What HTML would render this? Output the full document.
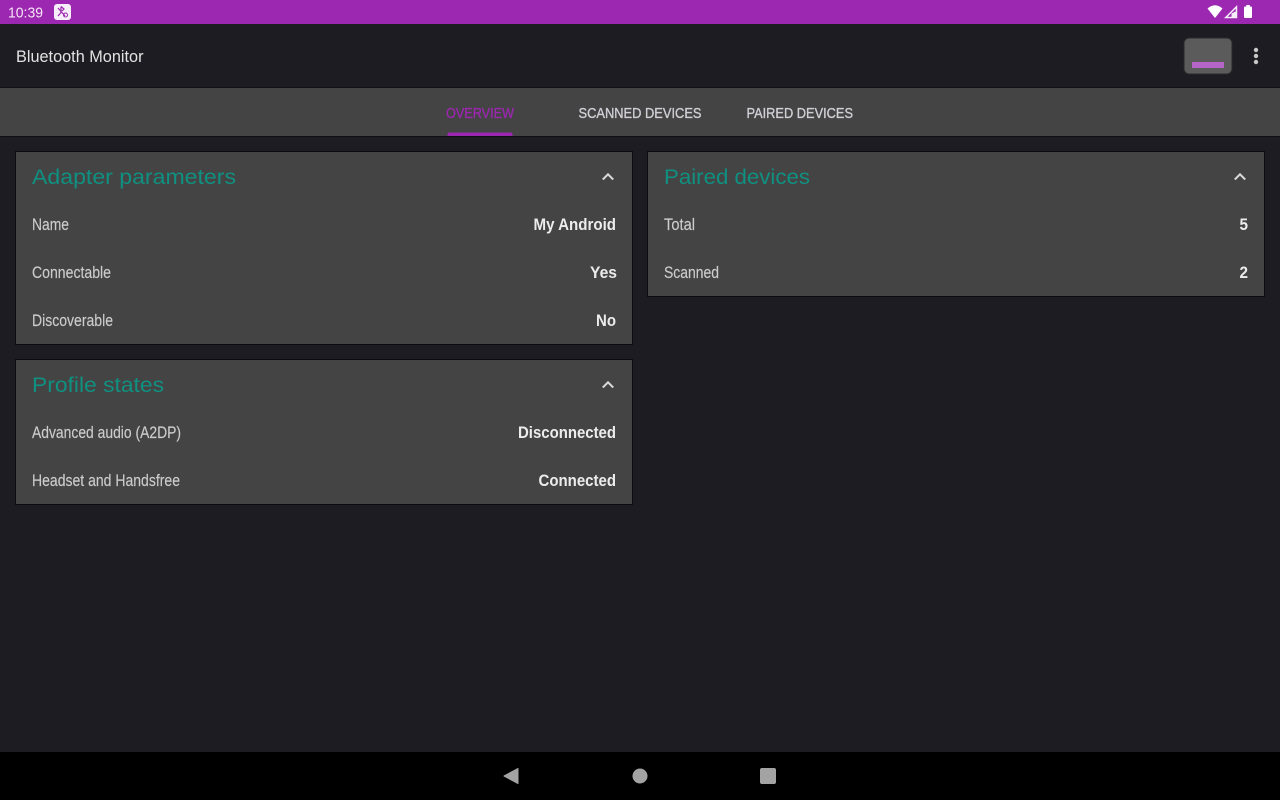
<!DOCTYPE html>
<html>
<head>
<meta charset="utf-8">
<style>
html,body{margin:0;padding:0;width:1280px;height:800px;overflow:hidden;background:#1c1c22;}
svg{display:block;}
text{font-family:"Liberation Sans",sans-serif;}
</style>
</head>
<body>
<svg width="1280" height="800" viewBox="0 0 1280 800" xmlns="http://www.w3.org/2000/svg">
<rect width="1280" height="800" fill="#1c1c22"/>
<!-- status bar -->
<rect width="1280" height="24" fill="#9c27b0"/>
<text x="8" y="17.500" font-size="15" fill="#f3e5f5" textLength="35" lengthAdjust="spacingAndGlyphs">10:39</text>
<rect x="54" y="4" width="17" height="16" rx="3" fill="#f6eef8"/>
<path d="M58 8l7 8M58 16l3.500-4M61 6.500v6M61 6.500l3 2.500-2 2" fill="none" stroke="#9c27b0" stroke-width="1.200"/>
<circle cx="65.500" cy="15" r="2" fill="none" stroke="#9c27b0" stroke-width="1"/>
<path d="M1207.500 8.500Q1215 2 1222.500 8.500L1215 18Z" fill="#fff"/>
<path d="M1236.500 6.800V17.500H1225.800Z" fill="none" stroke="#f6eef8" stroke-width="1.500"/>
<path d="M1236.500 11V17.500H1231.500V13.500Z" fill="#f6eef8"/>
<rect x="1244" y="6.500" width="8" height="11.500" rx="1" fill="#fff"/>
<rect x="1246.300" y="5" width="3.500" height="2" fill="#fff"/>
<!-- action bar -->
<text x="16" y="62" font-size="16.500" fill="#e2e2e2" textLength="127.500" lengthAdjust="spacingAndGlyphs">Bluetooth Monitor</text>
<rect x="1184" y="38" width="48" height="36" rx="5" fill="#5b5b5b" stroke="#2a2a2c" stroke-width="1"/>
<rect x="1192" y="62" width="32" height="6" fill="#b565c8"/>
<circle cx="1256" cy="50" r="2.200" fill="#c8c8c8"/>
<circle cx="1256" cy="56" r="2.200" fill="#c8c8c8"/>
<circle cx="1256" cy="62" r="2.200" fill="#c8c8c8"/>
<!-- tabs -->
<rect x="0" y="88" width="1280" height="48" fill="#444444"/>
<rect x="0" y="87" width="1280" height="1" fill="#111114"/>
<rect x="0" y="136" width="1280" height="1" fill="#0f0f12"/>
<g font-size="15">
<text x="446" y="118" fill="#9c27b0" stroke="#9c27b0" stroke-width=".35" textLength="68" lengthAdjust="spacingAndGlyphs">OVERVIEW</text>
<text x="578.500" y="118" fill="#d2cfd6" stroke="#d2cfd6" stroke-width=".35" textLength="123" lengthAdjust="spacingAndGlyphs">SCANNED DEVICES</text>
<text x="746.500" y="118" fill="#d2cfd6" stroke="#d2cfd6" stroke-width=".35" textLength="106.500" lengthAdjust="spacingAndGlyphs">PAIRED DEVICES</text>
</g>
<path d="M447.500 136v-1.500a2 2 0 0 1 2-2h61a2 2 0 0 1 2 2V136Z" fill="#9c27b0"/>
<!-- cards -->
<rect x="15.500" y="151.500" width="617" height="193" fill="#444444" stroke="#0d0d0f"/>
<rect x="647.500" y="151.500" width="617" height="145" fill="#444444" stroke="#0d0d0f"/>
<rect x="15.500" y="359.500" width="617" height="145" fill="#444444" stroke="#0d0d0f"/>
<!-- titles -->
<g font-size="21" fill="#0f9080">
<text x="32" y="184" textLength="204" lengthAdjust="spacingAndGlyphs">Adapter parameters</text>
<text x="664" y="184" textLength="146" lengthAdjust="spacingAndGlyphs">Paired devices</text>
<text x="32" y="392" textLength="132" lengthAdjust="spacingAndGlyphs">Profile states</text>
</g>
<!-- chevrons -->
<g fill="none" stroke="#d8d8d8" stroke-width="2">
<path d="M602.800 179.500L608 174.300L613.200 179.500"/>
<path d="M1234.800 179.500L1240 174.300L1245.200 179.500"/>
<path d="M602.800 387.500L608 382.300L613.200 387.500"/>
</g>
<!-- labels -->
<g font-size="17" fill="#cccccc" stroke="#cccccc" stroke-width=".15">
<text x="32" y="230" textLength="37" lengthAdjust="spacingAndGlyphs">Name</text>
<text x="32" y="278" textLength="79" lengthAdjust="spacingAndGlyphs">Connectable</text>
<text x="32" y="326" textLength="81" lengthAdjust="spacingAndGlyphs">Discoverable</text>
<text x="32" y="438" textLength="149" lengthAdjust="spacingAndGlyphs">Advanced audio (A2DP)</text>
<text x="32" y="486" textLength="148" lengthAdjust="spacingAndGlyphs">Headset and Handsfree</text>
<text x="664" y="230" textLength="31" lengthAdjust="spacingAndGlyphs">Total</text>
<text x="664" y="278" textLength="55" lengthAdjust="spacingAndGlyphs">Scanned</text>
</g>
<!-- values -->
<g font-size="16.500" font-weight="700" fill="#ececec">
<text x="533.500" y="230" textLength="82.500" lengthAdjust="spacingAndGlyphs">My Android</text>
<text x="590" y="278" textLength="27" lengthAdjust="spacingAndGlyphs">Yes</text>
<text x="596" y="326" textLength="20" lengthAdjust="spacingAndGlyphs">No</text>
<text x="518" y="438" textLength="98" lengthAdjust="spacingAndGlyphs">Disconnected</text>
<text x="538.500" y="486" textLength="77.500" lengthAdjust="spacingAndGlyphs">Connected</text>
<text x="1239.500" y="230" textLength="8.500" lengthAdjust="spacingAndGlyphs">5</text>
<text x="1239.500" y="278" textLength="8.500" lengthAdjust="spacingAndGlyphs">2</text>
</g>
<!-- nav bar -->
<rect x="0" y="752" width="1280" height="48" fill="#000"/>
<path d="M518 768.500V783.500L504 776Z" fill="#a3a3a3" stroke="#a3a3a3" stroke-width="1" stroke-linejoin="round"/>
<circle cx="640" cy="776" r="7.500" fill="#a3a3a3"/>
<rect x="760" y="768" width="16" height="16" rx="2" fill="#a3a3a3"/>
</svg>
</body>
</html>
